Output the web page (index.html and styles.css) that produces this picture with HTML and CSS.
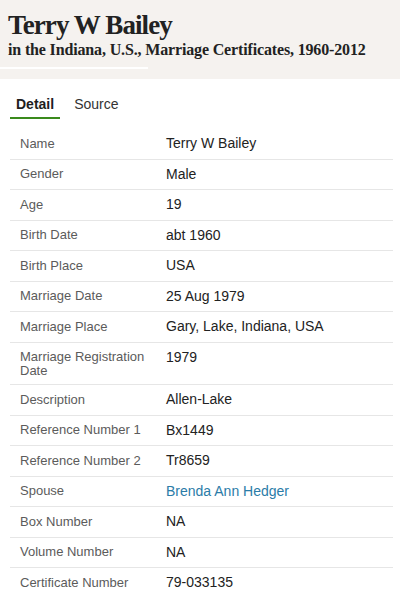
FILE: index.html
```html
<!DOCTYPE html>
<html>
<head>
<meta charset="utf-8">
<link rel="stylesheet" href="styles.css">
</head>
<body>
<header class="hero">
  <h1 class="title">Terry W Bailey</h1>
  <p class="subtitle">in the Indiana, U.S., Marriage Certificates, 1960-2012</p>
  <div class="hero-bar"></div>
</header>
<nav class="tabs">
  <span class="tab active">Detail</span>
  <span class="tab">Source</span>
</nav>
<div class="table">
  <div class="row"><div class="label">Name</div><div class="value">Terry W Bailey</div></div>
  <div class="row"><div class="label">Gender</div><div class="value">Male</div></div>
  <div class="row"><div class="label">Age</div><div class="value">19</div></div>
  <div class="row"><div class="label">Birth Date</div><div class="value">abt 1960</div></div>
  <div class="row"><div class="label">Birth Place</div><div class="value">USA</div></div>
  <div class="row"><div class="label">Marriage Date</div><div class="value">25 Aug 1979</div></div>
  <div class="row"><div class="label">Marriage Place</div><div class="value">Gary, Lake, Indiana, USA</div></div>
  <div class="row"><div class="label">Marriage Registration Date</div><div class="value">1979</div></div>
  <div class="row"><div class="label">Description</div><div class="value">Allen-Lake</div></div>
  <div class="row"><div class="label">Reference Number 1</div><div class="value">Bx1449</div></div>
  <div class="row"><div class="label">Reference Number 2</div><div class="value">Tr8659</div></div>
  <div class="row"><div class="label">Spouse</div><div class="value"><a class="link" href="#">Brenda Ann Hedger</a></div></div>
  <div class="row"><div class="label">Box Number</div><div class="value">NA</div></div>
  <div class="row"><div class="label">Volume Number</div><div class="value">NA</div></div>
  <div class="row"><div class="label">Certificate Number</div><div class="value">79-033135</div></div>
</div>
</body>
</html>
```

FILE: styles.css
```css
html, body {
  margin: 0;
  padding: 0;
  background: #ffffff;
}
body {
  font-family: "Liberation Sans", Arial, sans-serif;
  color: #222;
}
.hero {
  background: #f5f2ef;
  height: 79px;
  box-sizing: border-box;
  padding: 9.5px 0 0 8px;
}
.title {
  margin: 0;
  font-family: "Liberation Serif", "Times New Roman", serif;
  font-weight: bold;
  font-size: 27px;
  line-height: 30px;
  color: #222;
  letter-spacing: -0.9px;
  white-space: nowrap;
}
.subtitle {
  margin: 0;
  font-family: "Liberation Serif", "Times New Roman", serif;
  font-weight: bold;
  font-size: 16px;
  line-height: 20px;
  color: #222;
  letter-spacing: -0.15px;
  white-space: nowrap;
}
.hero-bar {
  margin: 7.5px 0 0 -8px;
  width: 148px;
  height: 2px;
  background: #ffffff;
}
.tabs {
  display: flex;
  padding: 16px 0 0 10px;
}
.tab {
  font-size: 14px;
  line-height: 18px;
  padding: 0 6px 4px;
  color: #333;
  border-bottom: 2px solid transparent;
}
.tab + .tab {
  margin-left: 8px;
}
.tab.active {
  font-weight: bold;
  color: #1e1e1e;
  border-bottom-color: #3a8a1c;
}
.table {
  margin: 10px 7px 0 10px;
}
.row {
  display: grid;
  grid-template-columns: 146px 1fr;
  padding: 6px 0 6px 10px;
  border-bottom: 1px solid #e6e6e6;
  font-size: 13px;
  min-height: 17.5px;
}
.row:last-child {
  border-bottom: none;
}
.label {
  color: #5b5b5b;
  line-height: 14px;
  padding-top: 1.5px;
  padding-right: 10px;
}
.value {
  color: #222;
  font-size: 14px;
  line-height: 17.5px;
}
.link {
  color: #2b7ca8;
  text-decoration: none;
}
```
